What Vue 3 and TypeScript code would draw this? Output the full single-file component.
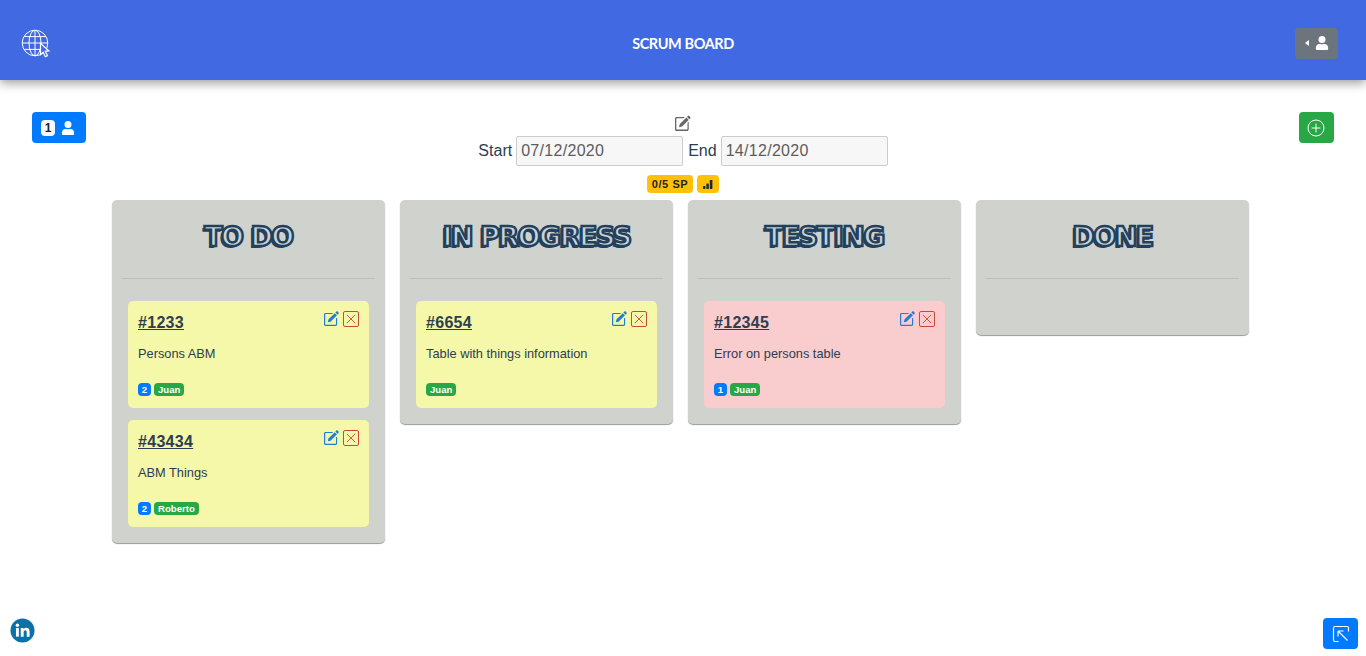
<script setup lang="ts">
interface Task {
  id: string
  text: string
  points?: number
  owner: string
  color: string
}

interface Column {
  title: string
  tasks: Task[]
}

const columns: Column[] = [
  {
    title: 'TO DO',
    tasks: [
      { id: '#1233', text: 'Persons ABM', points: 2, owner: 'Juan', color: 'yellow' },
      { id: '#43434', text: 'ABM Things', points: 2, owner: 'Roberto', color: 'yellow' },
    ],
  },
  {
    title: 'IN PROGRESS',
    tasks: [{ id: '#6654', text: 'Table with things information', owner: 'Juan', color: 'yellow' }],
  },
  {
    title: 'TESTING',
    tasks: [{ id: '#12345', text: 'Error on persons table', points: 1, owner: 'Juan', color: 'pink' }],
  },
  { title: 'DONE', tasks: [] },
]
</script>

<template>
  <div class="page">
    <header class="topbar">
      <svg class="globe" viewBox="0 0 30 30" width="30" height="30" fill="none" stroke="#fff" stroke-width="1">
        <circle cx="14" cy="14" r="12.8" />
        <ellipse cx="14" cy="14" rx="6" ry="12.8" />
        <path d="M14 1.2v25.6M1.2 14h25.6M3.2 7.6h21.6M3.2 20.4h21.6" />
        <path d="M19.5 14.5l8.4 7.4-3.6.4 2.2 4.4-2.2 1-2.1-4.5-2.7 2.5z" fill="#4169e1" stroke-width="1.2" />
      </svg>
      <div class="title">SCRUM BOARD</div>
      <button class="user-toggle">
        <span class="caret"></span>
        <svg viewBox="0 0 448 512" width="14" height="14" fill="#fff">
          <path d="M224 256a128 128 0 1 0 0-256 128 128 0 0 0 0 256zm90 32h-17a174 174 0 0 1-146 0h-17C60 288 0 348 0 422v42c0 27 21 48 48 48h352c27 0 48-21 48-48v-42c0-74-60-134-134-134z" />
        </svg>
      </button>
    </header>

    <section class="toolbar">
      <button class="members">
        <span class="count">1</span>
        <svg viewBox="0 0 448 512" width="14" height="14" fill="#fff">
          <path d="M224 256a128 128 0 1 0 0-256 128 128 0 0 0 0 256zm90 32h-17a174 174 0 0 1-146 0h-17C60 288 0 348 0 422v42c0 27 21 48 48 48h352c27 0 48-21 48-48v-42c0-74-60-134-134-134z" />
        </svg>
      </button>

      <div class="sprint">
        <svg class="sprint-edit" viewBox="0 0 16 16" width="16" height="16" fill="#666">
          <path d="M14.3 1.1l.9.9c.4.4.4 1 0 1.4l-.9.9-2.3-2.3.9-.9c.4-.4 1-.4 1.4 0zM11.4 2.6l2.3 2.3L7 11.6l-3 .7.7-3z" />
          <path d="M1.6 2h8.2l-1.2 1.2H1.9c-.3 0-.6.3-.6.6v10c0 .3.3.6.6.6h10c.3 0 .6-.3.6-.6V8l1.2-1.2v7.4c0 1-.8 1.8-1.8 1.8H1.6c-.9 0-1.6-.8-1.6-1.8V3.6C0 2.7.7 2 1.6 2z" />
        </svg>
        <div class="dates">
          <label>Start</label>
          <input class="date" value="07/12/2020" readonly />
          <label>End</label>
          <input class="date" value="14/12/2020" readonly />
        </div>
        <div class="sprint-badges">
          <span class="badge-warn">0/5 SP</span>
          <span class="badge-warn">
            <svg viewBox="0 0 12 12" width="12" height="12" fill="#212529">
              <rect x="1" y="8" width="2.4" height="3" rx=".4" />
              <rect x="4.4" y="5.5" width="2.4" height="5.5" rx=".4" />
              <rect x="7.8" y="2" width="2.6" height="9" rx=".4" />
            </svg>
          </span>
        </div>
      </div>

      <button class="add">
        <svg viewBox="0 0 18 18" width="18" height="18" fill="none" stroke="#fff" stroke-width="1">
          <circle cx="9" cy="9" r="8" />
          <path d="M9 4.6v8.8M4.6 9h8.8" />
        </svg>
      </button>
    </section>

    <main class="board">
      <div v-for="col in columns" :key="col.title" class="column">
        <h2 class="col-title">{{ col.title }}</h2>
        <hr class="rule" />
        <article v-for="task in col.tasks" :key="task.id" class="card" :class="task.color">
          <div class="card-tools">
            <svg viewBox="0 0 16 16" width="15" height="15" fill="#1f7fd6">
              <path d="M14.6.6l.9.9c.4.4.4 1 0 1.4l-1.1 1.1-2.3-2.3L13.2.6c.4-.4 1-.4 1.4 0zM11.5 2.3l2.3 2.3L7 11.4l-3 .7.7-3z" />
              <path d="M1.6 2h8.2L8.6 3.2H1.9c-.3 0-.6.3-.6.6v10.3c0 .3.3.6.6.6h10.3c.3 0 .6-.3.6-.6V8L14 6.8v7.6c0 .9-.7 1.6-1.6 1.6H1.6c-.9 0-1.6-.7-1.6-1.6V3.6C0 2.7.7 2 1.6 2z" />
            </svg>
            <span class="delete">
              <svg viewBox="0 0 10 10" width="10" height="10" fill="none" stroke="#c9483c" stroke-width=".9">
                <path d="M.8.8l8.4 8.4M9.2.8L.8 9.2" />
              </svg>
            </span>
          </div>
          <a class="card-id">{{ task.id }}</a>
          <p class="card-text">{{ task.text }}</p>
          <div class="card-badges">
            <span v-if="task.points" class="badge-blue">{{ task.points }}</span>
            <span class="badge-green">{{ task.owner }}</span>
          </div>
        </article>
      </div>
    </main>

    <a class="linkedin">
      <svg viewBox="0 0 26 26" width="25" height="25">
        <circle cx="13" cy="13" r="12.5" fill="#0a72a8" />
        <rect x="6.2" y="10.4" width="3" height="9" fill="#fff" />
        <circle cx="7.7" cy="7.6" r="1.8" fill="#fff" />
        <path d="M11.2 10.4h2.9v1.3c.5-.9 1.6-1.5 2.9-1.5 2.5 0 3.4 1.6 3.4 4v5.2h-3v-4.7c0-1.2-.4-2-1.4-2-1.2 0-1.8.8-1.8 2.1v4.6h-3z" fill="#fff" />
      </svg>
    </a>
    <button class="corner">
      <svg viewBox="0 0 18 18" width="18" height="18" fill="none" stroke="#fff" stroke-width="1.2">
        <path d="M6.5 16.5H3A1.5 1.5 0 0 1 1.500 15V3A1.500 1.500 0 0 1 3 1.500h12A1.500 1.500 0 0 1 16.500 3v3.500" />
        <path d="M6 6h5.500M6 6v5.500M6 6l9.500 9.500" />
      </svg>
    </button>
  </div>
</template>

<style>
html,
body {
  margin: 0;
  background: #fff;
}
</style>

<style scoped>
.page {
  position: relative;
  height: 656px;
  overflow: hidden;
  font-family: "Liberation Sans", Arial, sans-serif;
  color: #2c3e50;
}

.topbar {
  height: 80px;
  background: #4169e1;
  box-shadow: 0 3px 10px rgba(0, 0, 0, 0.4);
  display: flex;
  align-items: center;
  justify-content: space-between;
  padding: 6px 28px 0 21px;
  position: relative;
  box-sizing: border-box;
}

.globe {
  margin-top: 1px;
}

.title {
  position: absolute;
  left: 0;
  right: 0;
  text-align: center;
  color: #fff;
  font-family: "Lato", sans-serif;
  font-size: 14.5px;
  font-weight: 700;
  letter-spacing: -0.4px;
}

button {
  border: 0;
  padding: 0;
  cursor: pointer;
}

.user-toggle {
  width: 43px;
  height: 31px;
  border-radius: 4px;
  background: #6c757d;
  display: flex;
  align-items: center;
  justify-content: center;
  gap: 6px;
}

.caret {
  border-right: 4px solid #fff;
  border-top: 3.5px solid transparent;
  border-bottom: 3.5px solid transparent;
}

.toolbar {
  display: flex;
  justify-content: space-between;
  align-items: flex-start;
  padding: 32px 32px 0;
}

.members {
  width: 54px;
  height: 31px;
  padding-right: 2px;
  border-radius: 4px;
  background: #007bff;
  display: flex;
  align-items: center;
  justify-content: center;
  gap: 6px;
}

.count {
  width: 14px;
  height: 16px;
  background: #f8f9fa;
  color: #212529;
  border-radius: 4px;
  font-size: 12px;
  font-weight: 700;
  line-height: 16px;
}

.add {
  width: 35px;
  height: 31px;
  border-radius: 4px;
  background: #28a745;
  display: flex;
  align-items: center;
  justify-content: center;
}

.sprint {
  display: flex;
  flex-direction: column;
  align-items: center;
  margin-left: -19px;
  margin-top: 3px;
}

.sprint-edit {
  margin-bottom: 5px;
}

.dates {
  display: flex;
  align-items: center;
  gap: 4px;
  font-size: 16px;
  height: 30px;
}

.dates label:nth-of-type(2) {
  margin-left: 1px;
}

.date {
  width: 167px;
  height: 30px;
  box-sizing: border-box;
  border: 1px solid #ccc;
  border-radius: 2px;
  background: #f7f7f7;
  color: #5c5c5c;
  font-family: inherit;
  font-size: 16px;
  letter-spacing: 0.3px;
  padding: 0 4px;
  outline: none;
}

.sprint-badges {
  display: flex;
  gap: 4px;
  margin-top: 9px;
}

.badge-warn {
  height: 18px;
  min-width: 22px;
  padding: 0 5px;
  box-sizing: border-box;
  border-radius: 4px;
  background: #ffc107;
  color: #212529;
  font-size: 11px;
  font-weight: 700;
  line-height: 18px;
  display: flex;
  align-items: center;
  justify-content: center;
  letter-spacing: 0.6px;
}

.board {
  display: flex;
  align-items: flex-start;
  gap: 15px;
  padding-left: 112px;
  margin-top: 7px;
}

.column {
  width: 273px;
  box-sizing: border-box;
  background: #d0d3cd;
  border-radius: 5px;
  box-shadow: 0 1px 1px rgba(0, 0, 0, 0.4);
  padding: 0 16px 16px;
}

.col-title {
  margin: 0;
  height: 78px;
  line-height: 73px;
  text-align: center;
  font-family: "DejaVu Sans", sans-serif;
  font-size: 27px;
  font-weight: 700;
  letter-spacing: -1.5px;
  color: #c9d3d6;
  -webkit-text-stroke: 2.4px #23405c;
  text-shadow: -2px 2px 0 #23405c;
}

.rule {
  margin: 0 -6px 22px;
  border: 0;
  border-top: 1px solid #bcbfb9;
}

.column > .rule:last-child {
  margin-bottom: 40px;
}

.card {
  position: relative;
  height: 107px;
  box-sizing: border-box;
  border-radius: 5px;
  padding: 13px 10px 0;
  font-size: 12.8px;
}

.card + .card {
  margin-top: 12px;
}

.yellow {
  background: #f5f7a9;
}

.pink {
  background: #f9ccce;
}

.card-tools {
  position: absolute;
  top: 10px;
  right: 10px;
  display: flex;
  align-items: flex-start;
  gap: 4px;
}

.delete {
  width: 16px;
  height: 16px;
  box-sizing: border-box;
  border: 1px solid #c9483c;
  border-radius: 2px;
  display: flex;
  align-items: center;
  justify-content: center;
}

.card-id {
  display: block;
  font-size: 16px;
  font-weight: 700;
  line-height: 18px;
  text-decoration: underline;
  letter-spacing: 0.3px;
}

.card-text {
  margin: 14px 0 0;
  line-height: 16px;
}

.card-badges {
  position: absolute;
  left: 10px;
  top: 82px;
  display: flex;
  gap: 3px;
}

.badge-blue,
.badge-green {
  height: 13px;
  border-radius: 4px;
  color: #fff;
  font-size: 9.6px;
  font-weight: 700;
  line-height: 13px;
  text-align: center;
}

.badge-blue {
  width: 13px;
  background: #007bff;
}

.badge-green {
  padding: 0 4px;
  background: #28a745;
}

.linkedin {
  position: absolute;
  left: 10px;
  top: 618px;
  line-height: 0;
}

.corner {
  position: absolute;
  left: 1323px;
  top: 618px;
  width: 35px;
  height: 31px;
  border-radius: 4px;
  background: #007bff;
  display: flex;
  align-items: center;
  justify-content: center;
}
</style>
